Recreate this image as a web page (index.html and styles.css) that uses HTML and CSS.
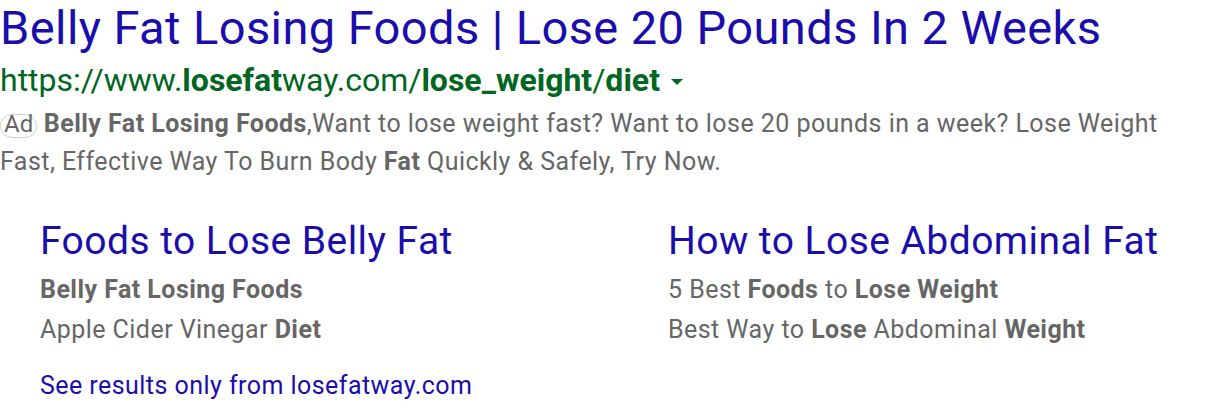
FILE: index.html
```html
<!DOCTYPE html>
<html>
<head>
<meta charset="utf-8">
<link rel="stylesheet" href="styles.css">
</head>
<body>
<div class="ad">
  <a class="title" href="#">Belly Fat Losing Foods | Lose 20 Pounds In 2 Weeks</a>
  <div class="url">https://www.<b>losefat</b>way.com/<b>lose_weight</b>/<b>diet</b><span class="arrow"></span></div>
  <div class="desc"><span class="badge">Ad</span> <b>Belly Fat Losing Foods</b>,Want to lose weight fast? Want to lose 20 pounds in a week? Lose Weight Fast, Effective Way To Burn Body <b>Fat</b> Quickly &amp; Safely, Try Now.</div>
  <div class="sitelinks">
    <div class="sitelink">
      <a class="sl-title" href="#">Foods to Lose Belly Fat</a>
      <div class="sl-line"><b>Belly Fat Losing Foods</b></div>
      <div class="sl-line">Apple Cider Vinegar <b>Diet</b></div>
    </div>
    <div class="sitelink">
      <a class="sl-title" href="#">How to Lose Abdominal Fat</a>
      <div class="sl-line">5 Best <b>Foods</b> to <b>Lose Weight</b></div>
      <div class="sl-line">Best Way to <b>Lose</b> Abdominal <b>Weight</b></div>
    </div>
  </div>
  <a class="more" href="#">See results only from losefatway.com</a>
</div>
</body>
</html>
```

FILE: styles.css
```css
html, body {
  margin: 0;
  padding: 0;
  background: #fff;
}
body {
  font-family: Roboto, "Liberation Sans", sans-serif;
}
a {
  text-decoration: none;
}
.ad {
  display: flex;
  flex-direction: column;
  align-items: flex-start;
  width: 1170px;
  padding-top: 2px;
}
.title {
  color: #1a0dab;
  font-size: 47px;
  line-height: 52px;
  letter-spacing: 0.42px;
}
.url {
  color: #006621;
  font-size: 32px;
  line-height: 38px;
  margin-top: 7px;
}
.url b {
  font-weight: 700;
}
.arrow {
  display: inline-block;
  width: 0;
  height: 0;
  border-left: 6px solid transparent;
  border-right: 6px solid transparent;
  border-top: 6px solid #006621;
  margin-left: 11px;
  vertical-align: 6px;
}
.desc {
  color: #666;
  font-size: 25px;
  line-height: 38px;
  letter-spacing: 0.45px;
  margin-top: 6px;
}
.desc b {
  font-weight: 700;
}
.badge {
  display: inline-block;
  border: 1px solid #cfcfcf;
  border-radius: 12px;
  font-size: 24px;
  line-height: 18px;
  letter-spacing: 0;
  padding: 0 3px 4px;
  color: #666;
  vertical-align: baseline;
}
.sitelinks {
  display: grid;
  grid-template-columns: 628px 500px;
  padding-left: 40px;
  margin-top: 34px;
}
.sitelink {
  display: flex;
  flex-direction: column;
  align-items: flex-start;
}
.sl-title {
  color: #1a0dab;
  font-size: 39px;
  line-height: 52px;
  letter-spacing: 0.45px;
  margin-bottom: 3px;
}
.sl-line {
  color: #666;
  font-size: 25px;
  line-height: 40px;
  letter-spacing: 0.45px;
}
.sl-line b {
  font-weight: 700;
}
.more {
  color: #1a0dab;
  font-size: 25px;
  line-height: 36px;
  letter-spacing: 0.45px;
  margin-left: 40px;
  margin-top: 18px;
}
```
